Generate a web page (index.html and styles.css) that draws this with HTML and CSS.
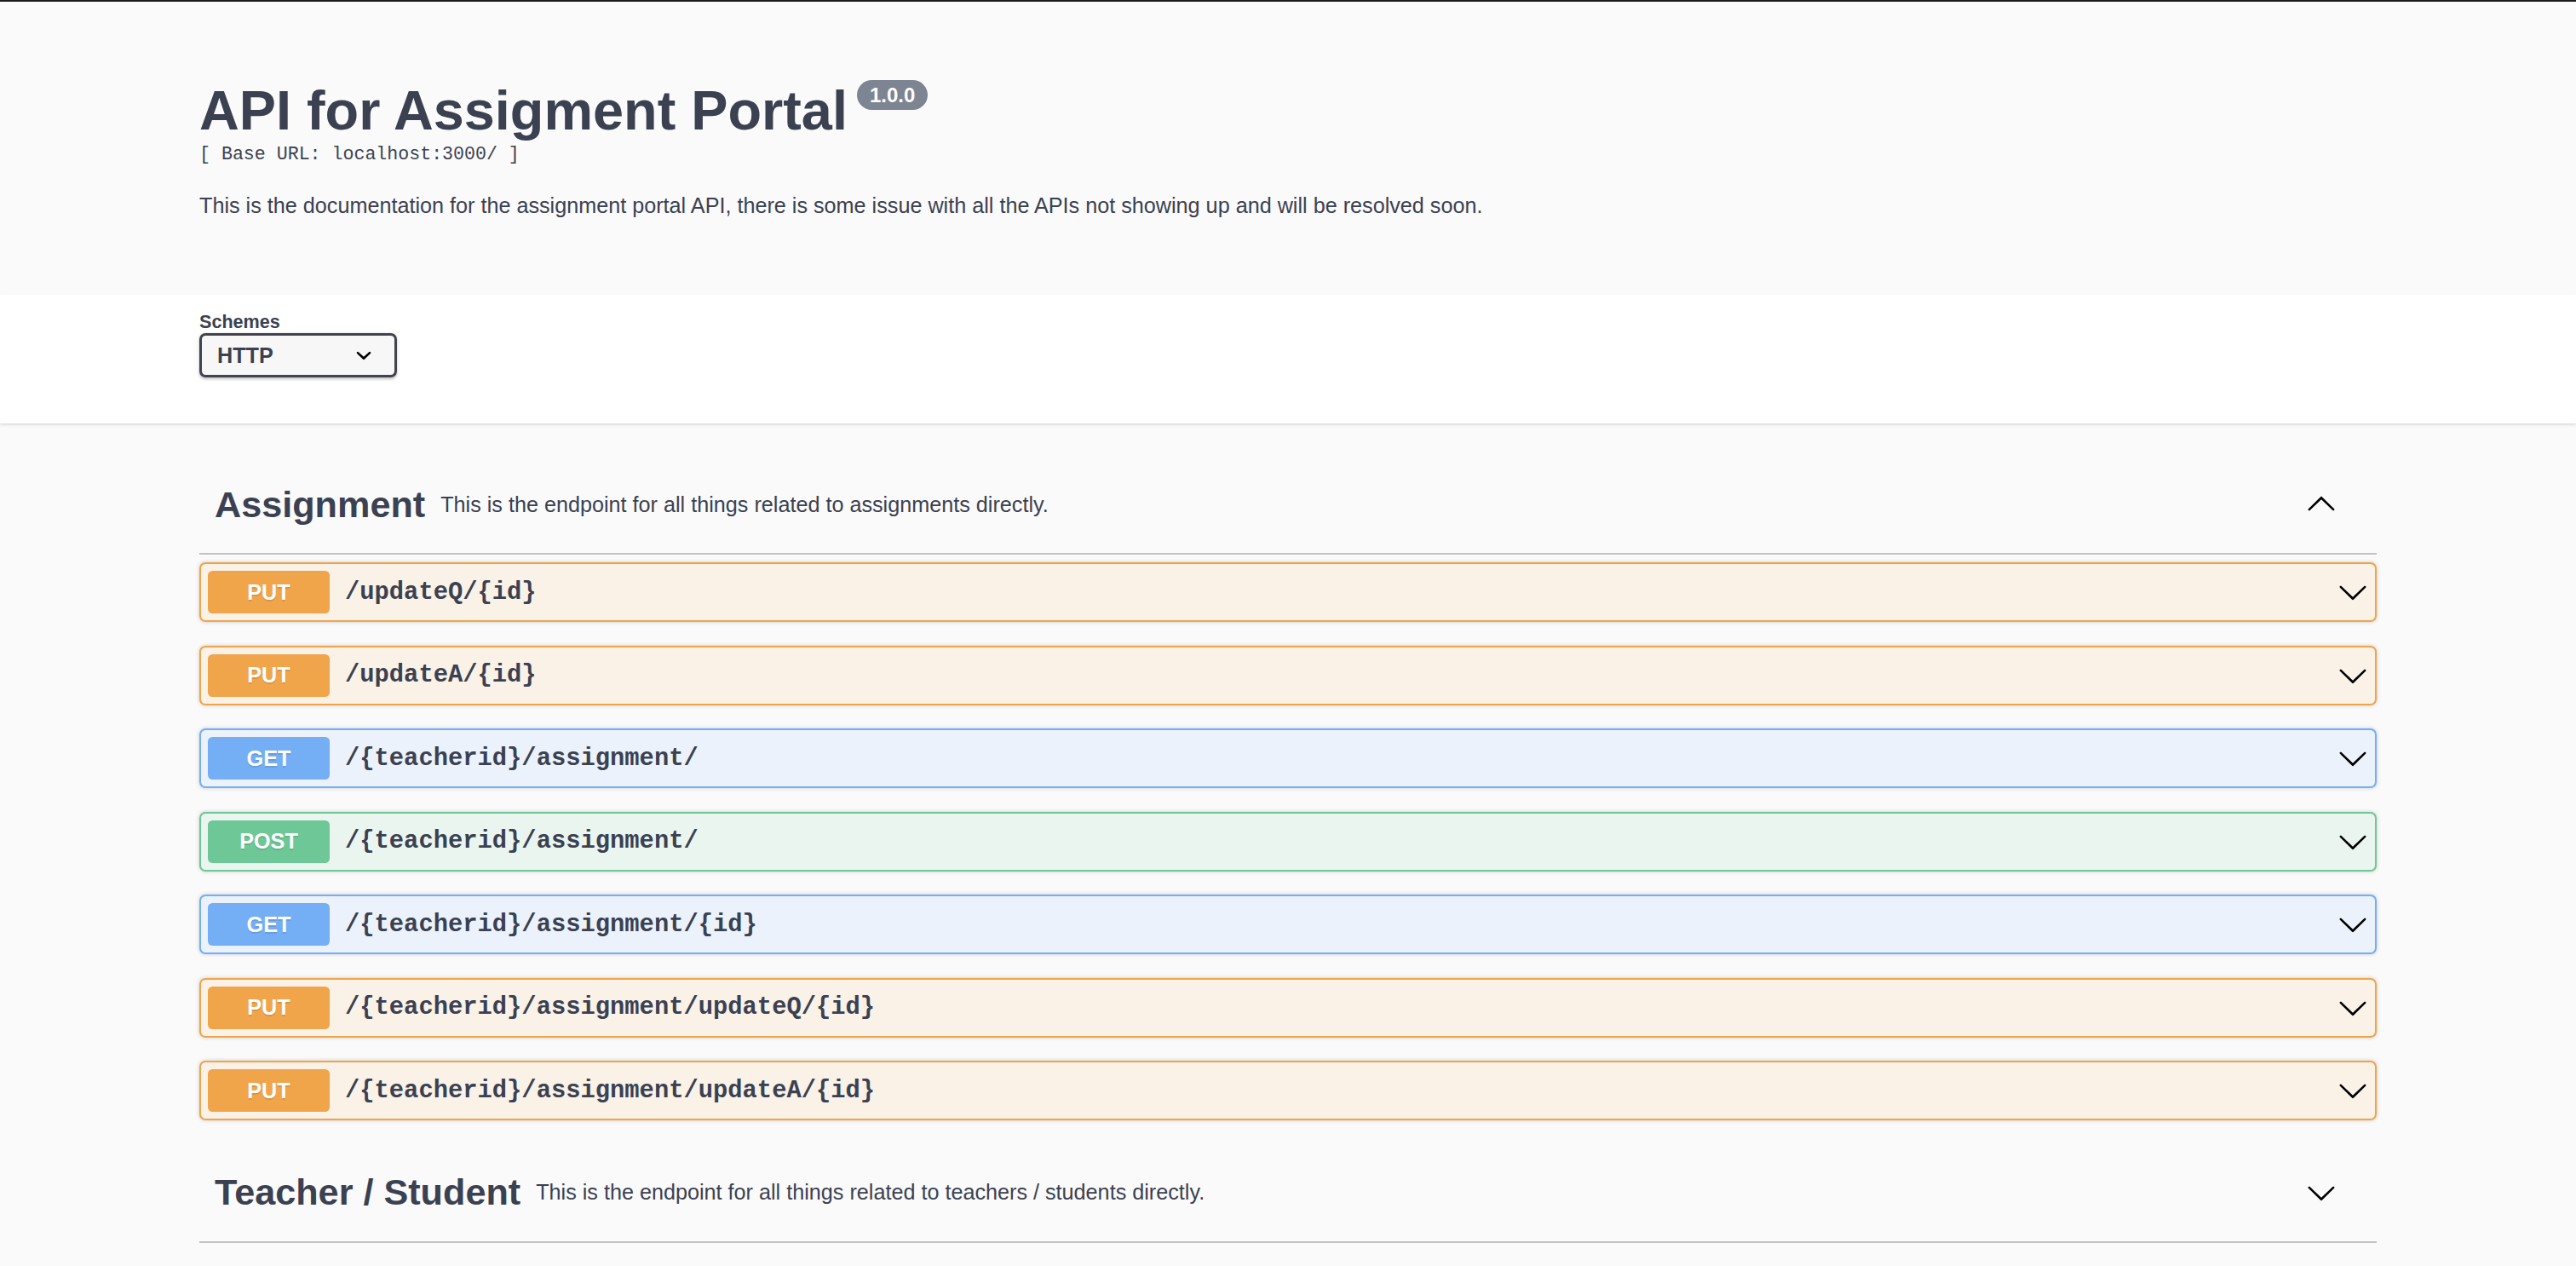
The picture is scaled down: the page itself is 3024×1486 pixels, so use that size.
FILE: index.html
```html
<!DOCTYPE html>
<html lang="en">
<head>
<meta charset="utf-8">
<title>Swagger UI</title>
<link rel="stylesheet" href="styles.css">
</head>
<body>
<div class="topline"></div>
<div class="swagger-ui">
  <section class="info">
    <div class="wrapper">
      <hgroup class="main">
        <h2 class="title">API for Assigment Portal<span class="version">1.0.0</span></h2>
        <div class="base-url">[ Base URL: localhost:3000/ ]</div>
      </hgroup>
      <p class="description">This is the documentation for the assignment portal API, there is some issue with all the APIs not showing up and will be resolved soon.</p>
    </div>
  </section>

  <section class="scheme-container">
    <div class="wrapper">
      <div class="schemes">
        <div class="schemes-title">Schemes</div>
        <div class="select">
          <span class="select-value">HTTP</span>
          <svg class="select-arrow" viewBox="0 0 20 20" width="36" height="36"><path d="M13.418 7.859a.695.695 0 01.978 0 .68.68 0 010 .969l-3.908 3.83a.697.697 0 01-.979 0l-3.908-3.83a.68.68 0 010-.969.695.695 0 01.978 0L10 11l3.418-3.141z"/></svg>
        </div>
      </div>
    </div>
  </section>

  <div class="wrapper">
    <div class="tag-section">
      <h3 class="tag">
        <span class="tag-name">Assignment</span>
        <small class="tag-desc">This is the endpoint for all things related to assignments directly.</small>
        <svg class="tag-arrow up" viewBox="0 0 20 20" width="36" height="36"><path d="M17.418 6.109c.272-.268.709-.268.979 0s.271.701 0 .969l-7.908 7.83c-.27.268-.707.268-.979 0l-7.908-7.83c-.27-.268-.27-.701 0-.969.271-.268.709-.268.979 0L10 13.25l7.418-7.141z"/></svg>
      </h3>

      <div class="opblock put">
        <span class="method">PUT</span>
        <span class="path">/updateQ/{id}</span>
        <svg class="arrow" viewBox="0 0 20 20" width="36" height="36"><path d="M17.418 6.109c.272-.268.709-.268.979 0s.271.701 0 .969l-7.908 7.83c-.27.268-.707.268-.979 0l-7.908-7.830c-.27-.268-.27-.701 0-.969.271-.268.709-.268.979 0L10 13.25l7.418-7.141z"/></svg>
      </div>
      <div class="opblock put">
        <span class="method">PUT</span>
        <span class="path">/updateA/{id}</span>
        <svg class="arrow" viewBox="0 0 20 20" width="36" height="36"><path d="M17.418 6.109c.272-.268.709-.268.979 0s.271.701 0 .969l-7.908 7.83c-.27.268-.707.268-.979 0l-7.908-7.83c-.27-.268-.27-.701 0-.969.271-.268.709-.268.979 0L10 13.25l7.418-7.141z"/></svg>
      </div>
      <div class="opblock get">
        <span class="method">GET</span>
        <span class="path">/{teacherid}/assignment/</span>
        <svg class="arrow" viewBox="0 0 20 20" width="36" height="36"><path d="M17.418 6.109c.272-.268.709-.268.979 0s.271.701 0 .969l-7.908 7.83c-.27.268-.707.268-.979 0l-7.908-7.83c-.27-.268-.27-.701 0-.969.271-.268.709-.268.979 0L10 13.25l7.418-7.141z"/></svg>
      </div>
      <div class="opblock post">
        <span class="method">POST</span>
        <span class="path">/{teacherid}/assignment/</span>
        <svg class="arrow" viewBox="0 0 20 20" width="36" height="36"><path d="M17.418 6.109c.272-.268.709-.268.979 0s.271.701 0 .969l-7.908 7.83c-.27.268-.707.268-.979 0l-7.908-7.83c-.27-.268-.27-.701 0-.969.271-.268.709-.268.979 0L10 13.25l7.418-7.141z"/></svg>
      </div>
      <div class="opblock get">
        <span class="method">GET</span>
        <span class="path">/{teacherid}/assignment/{id}</span>
        <svg class="arrow" viewBox="0 0 20 20" width="36" height="36"><path d="M17.418 6.109c.272-.268.709-.268.979 0s.271.701 0 .969l-7.908 7.83c-.27.268-.707.268-.979 0l-7.908-7.83c-.27-.268-.27-.701 0-.969.271-.268.709-.268.979 0L10 13.25l7.418-7.141z"/></svg>
      </div>
      <div class="opblock put">
        <span class="method">PUT</span>
        <span class="path">/{teacherid}/assignment/updateQ/{id}</span>
        <svg class="arrow" viewBox="0 0 20 20" width="36" height="36"><path d="M17.418 6.109c.272-.268.709-.268.979 0s.271.701 0 .969l-7.908 7.83c-.27.268-.707.268-.979 0l-7.908-7.83c-.27-.268-.27-.701 0-.969.271-.268.709-.268.979 0L10 13.25l7.418-7.141z"/></svg>
      </div>
      <div class="opblock put">
        <span class="method">PUT</span>
        <span class="path">/{teacherid}/assignment/updateA/{id}</span>
        <svg class="arrow" viewBox="0 0 20 20" width="36" height="36"><path d="M17.418 6.109c.272-.268.709-.268.979 0s.271.701 0 .969l-7.908 7.83c-.27.268-.707.268-.979 0l-7.908-7.83c-.27-.268-.27-.701 0-.969.271-.268.709-.268.979 0L10 13.25l7.418-7.141z"/></svg>
      </div>
    </div>

    <div class="tag-section">
      <h3 class="tag">
        <span class="tag-name">Teacher / Student</span>
        <small class="tag-desc">This is the endpoint for all things related to teachers / students directly.</small>
        <svg class="tag-arrow" viewBox="0 0 20 20" width="36" height="36"><path d="M17.418 6.109c.272-.268.709-.268.979 0s.271.701 0 .969l-7.908 7.83c-.27.268-.707.268-.979 0l-7.908-7.83c-.27-.268-.27-.701 0-.969.271-.268.709-.268.979 0L10 13.25l7.418-7.141z"/></svg>
      </h3>
    </div>
  </div>
</div>
</body>
</html>
```

FILE: styles.css
```css
html, body {
  margin: 0;
  padding: 0;
}

body {
  background: #fafafa;
  font-family: "Liberation Sans", Arial, Helvetica, sans-serif;
  color: #3b4151;
}

.topline {
  height: 2px;
  background: #1b1b1b;
}

.wrapper {
  max-width: 2556px;
  margin: 0 auto;
}

/* ---------- info ---------- */
.info {
  padding: 92px 0 90px;
}

.info .main {
  margin: 0 0 33px;
}

.title {
  margin: 0;
  font-size: 64.8px;
  line-height: 72px;
  font-weight: 700;
  color: #3b4151;
}

.version {
  display: inline-block;
  vertical-align: top;
  margin-left: 11px;
  padding: 3.5px 15px;
  border-radius: 57px;
  background: #7d8492;
  color: #fff;
  font-size: 24px;
  line-height: 28px;
  font-weight: 700;
}

.base-url {
  margin: 0;
  padding-top: 3px;
  font-family: "Liberation Mono", "Courier New", monospace;
  font-size: 21.6px;
  line-height: 24.5px;
  color: #3b4151;
}

.description {
  margin: 0;
  font-size: 25.2px;
  line-height: 29px;
  color: #3b4151;
}

/* ---------- schemes ---------- */
.scheme-container {
  background: #fff;
  box-shadow: 0 1.8px 3.6px 0 rgba(0, 0, 0, 0.15);
  padding: 20px 0 54px;
  margin: 0 0 38px;
}

.schemes-title {
  font-size: 21.6px;
  line-height: 24.8px;
  font-weight: 700;
  color: #3b4151;
}

.select {
  box-sizing: border-box;
  width: 232px;
  height: 52px;
  margin-top: 1px;
  display: flex;
  align-items: center;
  justify-content: space-between;
  padding: 0 18px;
  border: 3.6px solid #41444e;
  border-radius: 7.2px;
  background: #f7f7f7;
  box-shadow: 0 1.8px 3.6px 0 rgba(0, 0, 0, 0.25);
}

.select-value {
  font-size: 25.2px;
  font-weight: 700;
  color: #3b4151;
}

.select-arrow {
  display: block;
  fill: #000;
}

/* ---------- tags ---------- */
.tag-section + .tag-section {
  margin-top: 2px;
}

.tag {
  display: flex;
  align-items: center;
  height: 78px;
  margin: 0 0 9px;
  padding: 18px 36px 18px 18px;
  border-bottom: 2px solid rgba(59, 65, 81, 0.3);
  font-size: 43.2px;
  font-weight: 700;
  color: #3b4151;
}

.tag-name {
  white-space: nowrap;
}

.tag-desc {
  flex: 1;
  padding: 0 18px;
  font-size: 25.2px;
  font-weight: 400;
  color: #3b4151;
}

.tag-arrow {
  display: block;
  flex: none;
  margin-right: 11px;
  fill: #000;
}

.tag-arrow.up {
  transform: rotate(180deg);
}

/* ---------- operations ---------- */
.opblock {
  display: flex;
  align-items: center;
  padding: 8px;
  margin: 0 0 27.5px;
  border: 2px solid;
  border-radius: 7.2px;
  box-shadow: 0 0 5.4px rgba(0, 0, 0, 0.19);
}

.method {
  flex: none;
  width: 143px;
  height: 50px;
  display: flex;
  align-items: center;
  justify-content: center;
  border-radius: 5.4px;
  color: #fff;
  font-size: 25.2px;
  font-weight: 700;
  text-shadow: 0 1.8px 0 rgba(0, 0, 0, 0.1);
}

.path {
  flex: 1;
  padding: 0 18px;
  font-family: "Liberation Mono", "Courier New", monospace;
  font-size: 28.8px;
  font-weight: 700;
  color: #3b4151;
}

.arrow {
  display: block;
  flex: none;
  fill: #000;
}

.opblock.put {
  background: #faf1e7;
  border-color: #f0a54b;
}

.opblock.put .method {
  background: #f0a54b;
}

.opblock.get {
  background: #ebf2fb;
  border-color: #74aef5;
}

.opblock.get .method {
  background: #74aef5;
}

.opblock.post {
  background: #ebf5ef;
  border-color: #6dc796;
}

.opblock.post .method {
  background: #6dc796;
}
```
